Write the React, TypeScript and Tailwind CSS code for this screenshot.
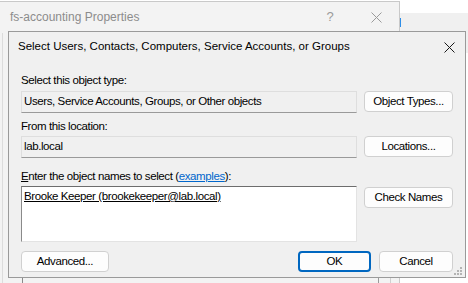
import React from "react"

const font = { fontFamily: '"Liberation Sans", Arial, sans-serif' }

const Btn = ({ label, def }: { label: string; def?: boolean }) => (
  <div
    className={
      "h-[21px] flex items-center justify-center rounded-[4px] bg-[#fdfdfd] text-[11.5px] tracking-[-0.4px] text-black " +
      (def ? "border-2 border-[#0067c0]" : "border border-[#d0d0d0]")
    }
  >
    {label}
  </div>
)

const Field = ({ text }: { text: string }) => (
  <div className="h-[22px] flex items-center pl-[2px] bg-[#f0f0f0] border border-[#dedede] border-b-[#9a9a9a] text-black">
    {text}
  </div>
)

const CloseIcon = ({ color }: { color: string }) => (
  <svg width="11" height="11" viewBox="0 0 11 11">
    <path d="M0.5 0.5 L10.5 10.5 M10.5 0.5 L0.5 10.5" stroke={color} strokeWidth="1" />
  </svg>
)

export default function App() {
  return (
    <div className="relative w-[468px] h-[283px] overflow-hidden bg-white" style={font}>
      {/* window further back */}
      <div className="absolute left-[398px] top-[13px] w-[80px] h-[40px] bg-[#f0f0f0]">
        <div className="absolute left-[1px] top-[5px] w-[2px] h-[9px] bg-[#2e8ee8]" />
      </div>

      {/* properties window */}
      <div className="absolute left-0 top-[1px] w-[400px] h-[300px] bg-[#f3f3f3] border-r border-t border-[#c9c9c9]">
        <div className="h-[30px] flex items-center pl-[10px] text-[12px] text-[#8c8c8c]">
          <span className="flex-1">fs-accounting Properties</span>
          <span className="w-[46px] text-center text-[13px] text-[#9a9a9a]">?</span>
          <span className="w-[46px] flex justify-center">
            <CloseIcon color="#9a9a9a" />
          </span>
        </div>
        <div className="absolute left-[2px] top-[31px] w-px h-[280px] bg-[#dcdcdc]" />
        <div className="absolute left-[22px] top-[270px] w-px h-[30px] bg-[#8a8a8a]" />
        <div className="absolute left-[378px] top-[270px] w-px h-[30px] bg-[#9a9a9a]" />
        <div className="absolute left-[390px] top-[270px] w-px h-[30px] bg-[#d0d0d0]" />
      </div>

      {/* select dialog */}
      <div className="absolute left-[8px] top-[31px] w-[458px] h-[247px] bg-[#f0f0f0] border border-[#9a9a9a]">
        <div className="h-[30px] flex items-center pl-[9px] pr-[10px] text-[11.5px] text-black">
          <span className="flex-1">Select Users, Contacts, Computers, Service Accounts, or Groups</span>
          <CloseIcon color="#1a1a1a" />
        </div>

        <div className="flex flex-col pl-[12px] pr-[12px] text-[11.5px] tracking-[-0.4px] text-black">
          <div className="mt-[11px] leading-[15px]">Select this object type:</div>
          <div className="mt-[3px] flex gap-[7px]">
            <div className="w-[336px]">
              <Field text="Users, Service Accounts, Groups, or Other objects" />
            </div>
            <div className="w-[89px]">
              <Btn label="Object Types..." />
            </div>
          </div>

          <div className="mt-[6px] leading-[15px]">From this location:</div>
          <div className="mt-[2px] flex gap-[7px]">
            <div className="w-[336px]">
              <Field text="lab.local" />
            </div>
            <div className="w-[89px]">
              <Btn label="Locations..." />
            </div>
          </div>

          <div className="mt-[11px] leading-[15px]">
            <span className="underline">E</span>nter the object names to select (
            <span className="text-[#0066cc] underline">examples</span>):
          </div>
          <div className="mt-[2px] flex gap-[7px]">
            <div className="w-[336px] h-[56px] bg-white border border-[#e3e3e3] border-t-[#6d6d6d] border-l-[#8a8a8a] pl-[2px] pt-[2px] leading-[15px]">
              <span className="underline">Brooke Keeper (brookekeeper@lab.local)</span>
            </div>
            <div className="w-[89px] pt-[1px]">
              <Btn label="Check Names" />
            </div>
          </div>

          <div className="mt-[9px] flex gap-[8px]">
            <div className="w-[88px]">
              <Btn label="Advanced..." />
            </div>
            <div className="flex-1" />
            <div className="w-[73px] h-[21px]">
              <Btn label="OK" def />
            </div>
            <div className="w-[74px]">
              <Btn label="Cancel" />
            </div>
          </div>
        </div>

        {/* size grip */}
        <div className="absolute right-[3px] bottom-[2px] w-[8px] h-[8px]">
          <div className="absolute right-0 bottom-0 w-[2px] h-[2px] bg-[#b4b4b4]" />
          <div className="absolute right-[3px] bottom-0 w-[2px] h-[2px] bg-[#b4b4b4]" />
          <div className="absolute right-[6px] bottom-0 w-[2px] h-[2px] bg-[#b4b4b4]" />
          <div className="absolute right-0 bottom-[3px] w-[2px] h-[2px] bg-[#b4b4b4]" />
          <div className="absolute right-[3px] bottom-[3px] w-[2px] h-[2px] bg-[#b4b4b4]" />
          <div className="absolute right-0 bottom-[6px] w-[2px] h-[2px] bg-[#b4b4b4]" />
        </div>
      </div>
    </div>
  )
}
